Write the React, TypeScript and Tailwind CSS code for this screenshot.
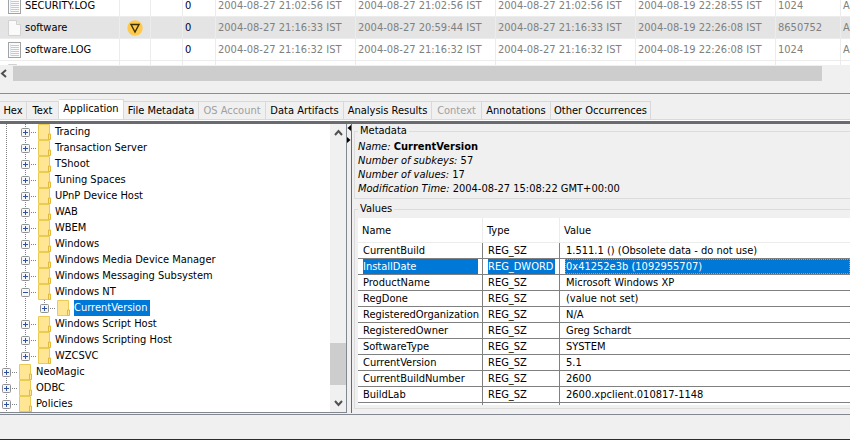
import { useState } from "react";

const files = [
  {
    name: "SECURITY.LOG",
    log: true,
    modified: "2004-08-27 21:02:56 IST",
    changed: "2004-08-27 21:02:56 IST",
    accessed: "2004-08-27 21:02:56 IST",
    created: "2004-08-19 22:28:55 IST",
    size: "1024",
  },
  {
    name: "software",
    log: false,
    modified: "2004-08-27 21:16:33 IST",
    changed: "2004-08-27 20:59:44 IST",
    accessed: "2004-08-27 21:16:33 IST",
    created: "2004-08-19 22:26:08 IST",
    size: "8650752",
  },
  {
    name: "software.LOG",
    log: true,
    modified: "2004-08-27 21:16:32 IST",
    changed: "2004-08-27 21:16:32 IST",
    accessed: "2004-08-27 21:16:32 IST",
    created: "2004-08-19 22:26:08 IST",
    size: "1024",
  },
];

const tabs = [
  { label: "Hex", width: "w-[27px]" },
  { label: "Text", width: "w-8" },
  { label: "Application", width: "w-[65px]" },
  { label: "File Metadata", width: "w-[75px]" },
  { label: "OS Account", width: "w-[67px]", disabled: true },
  { label: "Data Artifacts", width: "w-[78px]" },
  { label: "Analysis Results", width: "w-[88px]" },
  { label: "Context", width: "w-[50px]", disabled: true },
  { label: "Annotations", width: "w-[69px]" },
  { label: "Other Occurrences", width: "w-[100px]" },
];

const nodes = [
  { name: "Tracing", depth: 1 },
  { name: "Transaction Server", depth: 1 },
  { name: "TShoot", depth: 1 },
  { name: "Tuning Spaces", depth: 1 },
  { name: "UPnP Device Host", depth: 1 },
  { name: "WAB", depth: 1 },
  { name: "WBEM", depth: 1 },
  { name: "Windows", depth: 1 },
  { name: "Windows Media Device Manager", depth: 1 },
  { name: "Windows Messaging Subsystem", depth: 1 },
  { name: "Windows NT", depth: 1, open: true },
  { name: "CurrentVersion", depth: 2, last: true },
  { name: "Windows Script Host", depth: 1 },
  { name: "Windows Scripting Host", depth: 1 },
  { name: "WZCSVC", depth: 1, last: true },
  { name: "NeoMagic", depth: 0 },
  { name: "ODBC", depth: 0 },
  { name: "Policies", depth: 0 },
];

const values = [
  ["CurrentBuild", "REG_SZ", "1.511.1 () (Obsolete data - do not use)"],
  ["InstallDate", "REG_DWORD", "0x41252e3b (1092955707)"],
  ["ProductName", "REG_SZ", "Microsoft Windows XP"],
  ["RegDone", "REG_SZ", "(value not set)"],
  ["RegisteredOrganization", "REG_SZ", "N/A"],
  ["RegisteredOwner", "REG_SZ", "Greg Schardt"],
  ["SoftwareType", "REG_SZ", "SYSTEM"],
  ["CurrentVersion", "REG_SZ", "5.1"],
  ["CurrentBuildNumber", "REG_SZ", "2600"],
  ["BuildLab", "REG_SZ", "2600.xpclient.010817-1148"],
];

const FileIcon = ({ log }: { log: boolean }) => (
  <svg width="13" height="16" viewBox="0 0 13 16" className="shrink-0">
    {log ? (
      <>
        <rect x="0.5" y="0.5" width="12" height="15" fill="#fbfbfb" stroke="#a3a3a3" />
        <path d="M3 3.5h8M3 5.5h8M3 7.5h8M3 9.5h8M3 11.5h8M3 13.5h8" stroke="#b7cde6" />
        <path d="M2.5 2v12" stroke="#dde6f0" />
      </>
    ) : (
      <>
        <path d="M0.5 0.5h8l4 4v11h-12z" fill="#fafafa" stroke="#d2d2d2" />
        <path d="M8.5 0.5v4h4" fill="#ececec" stroke="#d2d2d2" />
      </>
    )}
  </svg>
);

const ScoreIcon = () => (
  <svg width="16" height="16" viewBox="0 0 16 16" className="ml-[5px]">
    <circle cx="8" cy="8" r="7.7" fill="#ffca4b" />
    <path d="M4 4.5h8L8 12z" fill="none" stroke="#3b3000" strokeWidth="1.4" />
  </svg>
);

const FolderIcon = () => (
  <svg width="13" height="16" viewBox="0 0 13 16" className="shrink-0">
    <path d="M0.5 0.5h11v15h-11z" fill="#ffe694" stroke="#eccb55" />
    <path d="M10.5 15.5v-5.5h2v5.5z" fill="#ffe694" stroke="#e3b93a" />
  </svg>
);

const Guide = () => (
  <svg width="19" height="16" viewBox="0 0 19 16" className="shrink-0">
    <path d="M6.5 0v16" stroke="#808080" strokeDasharray="1 1" />
  </svg>
);

const Expander = ({ open, last }: { open?: boolean; last?: boolean }) => (
  <svg width="19" height="16" viewBox="0 0 19 16">
    <path d={last ? "M6.5 0v8" : "M6.5 0v16"} stroke="#808080" strokeDasharray="1 1" />
    <path d="M12 8.5h5" stroke="#808080" strokeDasharray="1 1" />
    <rect x="2.5" y="4.5" width="8" height="8" rx="1" fill="#f6f6f6" stroke="#919191" />
    <path d={open ? "M4 8.5h5" : "M4 8.5h5M6.5 6v5"} stroke="#2f4fa3" />
  </svg>
);

const Chevron = ({ d }: { d: string }) => (
  <svg width="9" height="9" viewBox="0 0 9 9">
    <path d={d} fill="none" stroke="#505050" strokeWidth="2" />
  </svg>
);

const FileTable = () => (
  <div className="h-[65px] overflow-hidden bg-white">
    <table className="-mt-[5px] w-full table-fixed border-separate border-spacing-0">
      <colgroup>
        <col className="w-[120px]" />
        <col className="w-[31px]" />
        <col className="w-8" />
        <col className="w-[33px]" />
        <col className="w-[140px]" />
        <col className="w-[140px]" />
        <col className="w-[140px]" />
        <col className="w-[140px]" />
        <col className="w-[65px]" />
        <col />
      </colgroup>
      <tbody className="text-[#808080] [&_td]:h-[22px] [&_td]:border-r [&_td]:border-b [&_td]:border-[#ececec] [&_td]:pl-0.5 [&_td:last-child]:border-r-0">
        {files.map((file) => (
          <tr key={file.name} className={file.log ? "bg-white" : "bg-[#e4e4e4]"}>
            <td>
              <div className="flex items-center gap-1 pl-1.5 text-black">
                <FileIcon log={file.log} />
                {file.name}
              </div>
            </td>
            <td>{!file.log && <ScoreIcon />}</td>
            <td></td>
            <td className="text-[#000030]">0</td>
            <td>{file.modified}</td>
            <td>{file.changed}</td>
            <td>{file.accessed}</td>
            <td>{file.created}</td>
            <td>{file.size}</td>
            <td>A</td>
          </tr>
        ))}
        <tr>
          <td>
            <div className="flex pl-1.5">
              <FileIcon log={false} />
            </div>
          </td>
          <td></td>
          <td></td>
          <td></td>
          <td></td>
          <td></td>
          <td></td>
          <td></td>
          <td></td>
          <td></td>
        </tr>
      </tbody>
    </table>
  </div>
);

const RegistryTree = () => {
  const [selected, setSelected] = useState("CurrentVersion");

  return (
    <div className="flex w-[347px] shrink-0 border-r border-b border-[#828790] bg-white">
      <ul className="grow">
        {nodes.map((node) => (
          <li key={node.name} className="flex h-4 items-center">
            {node.depth > 0 && <Guide />}
            {node.depth > 1 && <Guide />}
            <button aria-label={"Toggle " + node.name} className="shrink-0">
              <Expander open={node.open} last={node.last} />
            </button>
            <FolderIcon />
            <button
              onClick={() => setSelected(node.name)}
              className={
                "ml-1 h-4 pr-[3px] leading-4 whitespace-nowrap " +
                (selected === node.name ? "bg-[#0078d7] text-white" : "")
              }
            >
              {node.name}
            </button>
          </li>
        ))}
      </ul>
      <div className="flex w-4 flex-col items-center bg-[#f0f0f0] py-1">
        <Chevron d="M1 7l3.5-4L8 7" />
        <div className="mt-auto mb-3.5 h-[42px] w-full bg-[#cdcdcd]"></div>
        <Chevron d="M1 2l3.5 4L8 2" />
      </div>
    </div>
  );
};

const ValuesTable = () => (
  <div className="h-[187px] overflow-hidden bg-white">
    <table className="w-full table-fixed border-separate border-spacing-0">
      <colgroup>
        <col className="w-[125px]" />
        <col className="w-[77px]" />
        <col />
      </colgroup>
      <thead>
        <tr className="[&_th]:h-[25px] [&_th]:border-b [&_th]:border-[#ececec] [&_th]:pt-0.5 [&_th]:pl-1 [&_th]:text-left [&_th]:font-normal">
          <th className="border-r">Name</th>
          <th className="border-r">Type</th>
          <th>Value</th>
        </tr>
      </thead>
      <tbody className="[&_td]:h-4 [&_td]:border-b [&_td]:border-[#808080] [&_td]:leading-[15px] [&_td]:whitespace-nowrap">
        {values.map(([name, type, value]) => {
          const active = name === "InstallDate";
          const fill = active ? "bg-[#0078d7] text-white" : "";
          return (
            <tr key={name}>
              <td className="border-r pr-1">
                <div className={"ml-[5px] " + fill}>{name}</div>
              </td>
              <td className="border-r pr-1">
                <div className={"ml-[5px] " + fill}>{type}</div>
              </td>
              <td>
                <div
                  className={
                    "ml-[5px] pl-px " +
                    (active ? "outline-1 -outline-offset-1 outline-dotted outline-[#ff8728] " : "") +
                    fill
                  }
                >
                  {value}
                </div>
              </td>
            </tr>
          );
        })}
        <tr>
          <td className="border-r"></td>
          <td className="border-r"></td>
          <td></td>
        </tr>
      </tbody>
    </table>
  </div>
);

const App = () => {
  const [tab, setTab] = useState("Application");

  return (
    <div className="flex min-h-screen flex-col overflow-hidden border-b border-[#20303a] bg-[#f0f0f0] font-['DejaVu_Sans_Condensed','DejaVu_Sans',sans-serif] text-[11px] leading-[14px] text-black">
      <FileTable />
      <div className="mt-px flex h-[15px] items-center">
        <div className="flex w-[13px] justify-start">
          <Chevron d="M6 1L2 4.5L6 8" />
        </div>
        <div className="mr-7 h-full grow bg-[#cdcdcd]"></div>
      </div>
      <div className="mt-3 border-t border-[#8b8b96]"></div>

      <div role="tablist" className="mt-[5px] flex h-5 items-end">
        {tabs.map((item) => (
          <button
            key={item.label}
            role="tab"
            aria-selected={tab === item.label}
            disabled={item.disabled}
            onClick={() => setTab(item.label)}
            className={
              "shrink-0 border-t border-r border-[#d9d9d9] whitespace-nowrap " +
              item.width +
              (tab === item.label ? " h-5 bg-white pb-0.5" : " h-[18px]") +
              (item.disabled ? " text-[#a0a0a0]" : "")
            }
          >
            {item.label}
          </button>
        ))}
      </div>
      <div className="border-t border-[#d9d9d9] bg-white pt-px"></div>

      <div className="flex border-t-[3px] border-b border-[#696b70] border-b-[#828790] pb-px">
        <RegistryTree />
        <div className="flex w-[5px] shrink-0 flex-col items-center gap-1.5 border-r border-[#696969] bg-[#f0f0f0] pt-px">
          <svg width="4" height="6" viewBox="0 0 4 6">
            <path d="M4 0v6L0.5 3z" fill="#000" />
          </svg>
          <svg width="4" height="6" viewBox="0 0 4 6">
            <path d="M0 0v6L3.5 3z" fill="#000" />
          </svg>
        </div>
        <div className="flex min-w-0 grow flex-col gap-1 pt-px pl-0.5">
          <fieldset className="min-w-0 border border-r-0 border-[#dcdcdc] pb-0.5 pl-[3px]">
            <legend className="px-0.5 leading-3">Metadata</legend>
            <p className="mt-[3px]">
              <i>Name:</i> <b>CurrentVersion</b>
            </p>
            <p>
              <i>Number of subkeys:</i> 57
            </p>
            <p>
              <i>Number of values:</i> 17
            </p>
            <p>
              <i>Modification Time:</i> 2004-08-27 15:08:22 GMT+00:00
            </p>
          </fieldset>
          <fieldset className="min-w-0 border border-r-0 border-[#dcdcdc] pb-[3px] pl-[3px]">
            <legend className="px-0.5 leading-3">Values</legend>
            <div className="pt-[3px]">
              <ValuesTable />
            </div>
          </fieldset>
        </div>
      </div>
    </div>
  );
};

export default App;
